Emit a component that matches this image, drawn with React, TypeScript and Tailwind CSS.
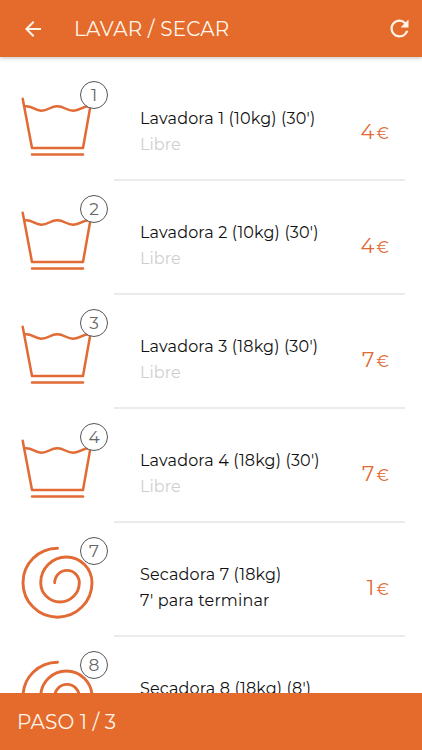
import { MdArrowBack, MdRefresh } from "react-icons/md";

interface Machine {
  id: number;
  type: "washer" | "dryer";
  name: string;
  status?: string;
  busy?: boolean;
  price?: number;
}

const machines: Machine[] = [
  { id: 1, type: "washer", name: "Lavadora 1 (10kg) (30')", status: "Libre", price: 4 },
  { id: 2, type: "washer", name: "Lavadora 2 (10kg) (30')", status: "Libre", price: 4 },
  { id: 3, type: "washer", name: "Lavadora 3 (18kg) (30')", status: "Libre", price: 7 },
  { id: 4, type: "washer", name: "Lavadora 4 (18kg) (30')", status: "Libre", price: 7 },
  { id: 7, type: "dryer", name: "Secadora 7 (18kg)", status: "7' para terminar", busy: true, price: 1 },
  { id: 8, type: "dryer", name: "Secadora 8 (18kg) (8')" },
];

function WasherIcon() {
  return (
    <svg width="114" height="114" viewBox="0 0 114 114" fill="none" stroke="#e26a34" strokeWidth="2.5" strokeLinecap="round" strokeLinejoin="round">
      <path d="M22.7 31.7L32 81H83L91.5 33" />
      <path d="M32 87.5H83" />
      <path d="M25 39.3C33 38.6 34 43.7 41.3 43.7S50 39.3 57.3 39.3S66 43.7 73.3 43.7S82 39.3 89 39.3" />
    </svg>
  );
}

function DryerIcon() {
  return (
    <svg width="114" height="114" viewBox="0 0 114 114" fill="none" stroke="#e26a34" strokeWidth="2.9" strokeLinecap="round">
      <path d="M57.5 25.2A34.5 34.5 0 1 0 92 59.7A25.65 25.65 0 0 0 40.7 59.7A19.3 19.3 0 0 0 79.3 59.7A12.3 12.3 0 0 0 54.7 59.7" />
    </svg>
  );
}

function MachineRow({ machine }: { machine: Machine }) {
  return (
    <li className="flex h-[114px] shrink-0">
      <div className="relative w-[114px] shrink-0">
        {machine.type === "washer" ? <WasherIcon /> : <DryerIcon />}
        <span className="absolute left-[80px] top-[14px] flex size-[28px] items-center justify-center rounded-full border border-[#555] bg-white pt-px text-[17px] font-normal text-[#666]">
          {machine.id}
        </span>
      </div>
      <div className="mr-[17px] flex flex-1 justify-between border-b-2 border-[#ebebeb] pr-4 pl-[26px]">
        <div className="pt-[39px] text-[16px] leading-[26px] tracking-[0.16px] whitespace-nowrap text-[#111]">
          <div>{machine.name}</div>
          {machine.status && (
            <div className={machine.busy ? "" : "tracking-[0.05px] text-[#cfcfcf]"}>
              {machine.status}
            </div>
          )}
        </div>
        {machine.price && (
          <div className="flex items-baseline gap-[2px] pt-[53px] text-[#e26a34]">
            <span className="text-[21px] leading-6">{machine.price}</span>
            <span className="text-[16px] leading-6">€</span>
          </div>
        )}
      </div>
    </li>
  );
}

export default function App() {
  return (
    <div className="flex h-[750px] w-[422px] flex-col overflow-hidden bg-white font-['Montserrat','Inter',sans-serif]">
      <header className="z-10 flex h-[57px] shrink-0 items-center bg-[#e46b2c] pr-[9px] pl-[21px] text-[#fff5e9] shadow-[0_1px_4px_rgba(0,0,0,0.25)]">
        <MdArrowBack size={24} />
        <h1 className="ml-[29px] flex-1 text-[20px] font-normal tracking-[0.2px]">LAVAR / SECAR</h1>
        <MdRefresh size={27} />
      </header>
      <ul className="flex min-h-0 flex-1 flex-col overflow-hidden pt-[10px]">
        {machines.map((machine) => (
          <MachineRow key={machine.id} machine={machine} />
        ))}
      </ul>
      <footer className="flex h-[57px] shrink-0 items-center bg-[#e46b2c] px-[17px] text-[20px] font-normal tracking-[0.14px] text-[#fff5e9]">
        PASO 1 / 3
      </footer>
    </div>
  );
}
